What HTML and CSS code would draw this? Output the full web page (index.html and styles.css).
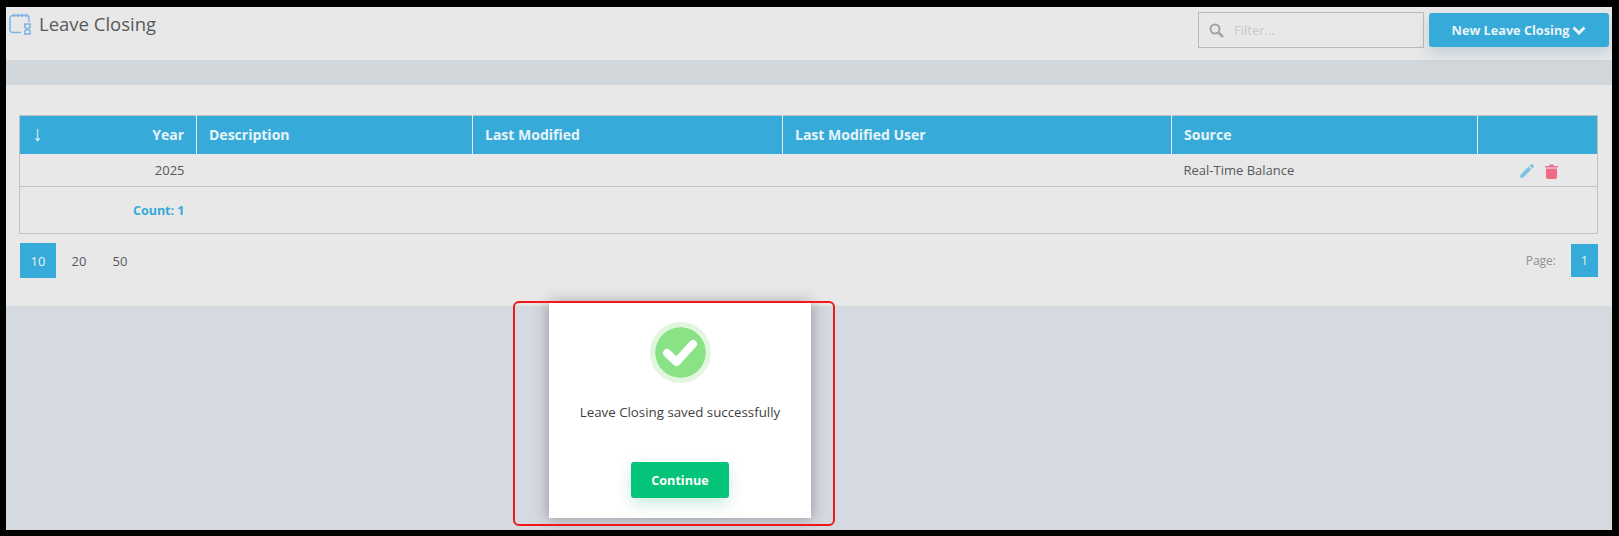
FILE: index.html
```html
<!DOCTYPE html>
<html lang="en">

<head>
    <meta charset="UTF-8">
    <title>Leave Closing</title>
    <link rel="stylesheet" href="styles.css">
</head>

<body>
    <div class="frame">
        <header class="page-header">
            <div class="title">
                <svg class="title-icon" width="23" height="22" viewBox="0 0 23 22" fill="none" stroke="#7fb2e5" stroke-width="1.5">
                    <path d="M12 19.500H3.500A2.500 2.500 0 0 1 1 17V5a2.500 2.500 0 0 1 2.500-2.500h14A2.500 2.500 0 0 1 20 5v4"/>
                    <path d="M5 .500v3.500M9 .500v3.500M13 .500v3.500M17 .500v3.500" stroke-width="1.300"/>
                    <path d="M15 11h7M15 21h7M16 11v3.500l2.500 1.500 2.500-1.500V11M16 21v-3.500l2.500-1.500 2.500 1.500V21"/>
                </svg>
                <h1>Leave Closing</h1>
            </div>
            <div class="search">
                <svg width="15" height="15" viewBox="0 0 15 15" fill="none" stroke="#a3a3a3">
                    <circle cx="6" cy="6" r="4.500" stroke-width="2"/>
                    <path d="M9.500 9.500l4.500 4.500" stroke-width="2.500"/>
                </svg>
                <span>Filter...</span>
            </div>
            <button class="new-btn">New Leave Closing
                <svg width="14" height="9" viewBox="0 0 14 9" fill="none" stroke="#e8f3f8" stroke-width="3">
                    <path d="M1.500 1.500L7 7l5.500-5.500"/>
                </svg>
            </button>
        </header>

        <div class="band"></div>

        <section class="panel">
            <table class="grid">
                <colgroup>
                    <col class="col-year">
                    <col class="col-desc">
                    <col class="col-mod">
                    <col class="col-user">
                    <col class="col-source">
                    <col>
                </colgroup>
                <thead>
                    <tr>
                        <th class="year-head"><span class="sort">↓</span>Year</th>
                        <th>Description</th>
                        <th>Last Modified</th>
                        <th>Last Modified User</th>
                        <th>Source</th>
                        <th></th>
                    </tr>
                </thead>
                <tbody>
                    <tr class="data-row">
                        <td class="num">2025</td>
                        <td></td>
                        <td></td>
                        <td></td>
                        <td>Real-Time Balance</td>
                        <td class="actions">
                            <svg width="14" height="14" viewBox="0 0 14 14" fill="#7cc3e3">
                                <path d="M0 14l.8-3.600L8.600 2.600l2.800 2.800-7.800 7.800z"/>
                                <path d="M9.600 1.600L10.800.4a1.200 1.200 0 0 1 1.700 0l1.100 1.100a1.200 1.200 0 0 1 0 1.700l-1.200 1.200z"/>
                            </svg>
                            <svg width="13" height="15" viewBox="0 0 13 15" fill="#ee6a85">
                                <path d="M0 2h4.500V.500h4V2H13v1.500H0z"/>
                                <path d="M1 4.500h11V13a2 2 0 0 1-2 2H3a2 2 0 0 1-2-2z"/>
                            </svg>
                        </td>
                    </tr>
                    <tr class="count-row">
                        <td class="num count">Count: 1</td>
                        <td colspan="5"></td>
                    </tr>
                </tbody>
            </table>

            <div class="pager">
                <div class="sizes">
                    <a class="page-box">10</a>
                    <a class="page-box plain">20</a>
                    <a class="page-box plain">50</a>
                </div>
                <div class="pages">
                    <span>Page:</span>
                    <a class="page-box one">1</a>
                </div>
            </div>
        </section>

        <div class="dialog">
            <div class="check">
                <svg width="36" height="28" viewBox="0 0 36 28" fill="none" stroke="#fff" stroke-width="8" stroke-linecap="round" stroke-linejoin="round">
                    <path d="M5 14l9.500 9L31 5"/>
                </svg>
            </div>
            <p>Leave Closing saved successfully</p>
            <button class="continue">Continue</button>
        </div>
        <div class="red-box"></div>
    </div>
</body>

</html>
```

FILE: styles.css
```css
* {
    box-sizing: border-box;
}

body {
    margin: 0;
    font-family: "Open Sans", sans-serif;
    background: #000;
}

.frame {
    position: relative;
    height: 536px;
    border-style: solid;
    border-color: #000;
    border-width: 7px 7px 6px 6px;
    background: #d5d9e0;
    overflow: hidden;
}

.page-header {
    display: flex;
    align-items: flex-start;
    height: 53px;
    padding: 5px 3px 0 3px;
    background: #e8e8e8;
}

.title {
    display: flex;
    align-items: flex-start;
    flex: 1;
}

.title-icon {
    margin-top: 1px;
}

h1 {
    margin: -1px 0 0 7px;
    font-size: 18.500px;
    line-height: 26px;
    font-weight: 400;
    color: #58595b;
}

.search {
    display: flex;
    align-items: center;
    gap: 10px;
    width: 226px;
    height: 36px;
    padding-left: 10px;
    border: 1px solid #b9b9b9;
    font-size: 13px;
    color: #c9c9c9;
}

.new-btn {
    display: flex;
    align-items: center;
    justify-content: center;
    gap: 3px;
    width: 180px;
    height: 34px;
    margin: 1px 0 0 5px;
    border: none;
    border-radius: 3px;
    background: #36abd9;
    color: #e8f3f8;
    font-family: inherit;
    font-size: 12.700px;
    font-weight: 700;
    box-shadow: 0 6px 14px rgba(54, 120, 160, 0.22);
}

.band {
    height: 25px;
    background: #d2d7db;
}

.panel {
    height: 221px;
    padding: 30px 14px 0 13px;
    background: #e8e8e8;
}

.grid {
    width: 100%;
    table-layout: fixed;
    border-collapse: collapse;
    border: 1px solid #c2c2c2;
    font-size: 13px;
    color: #58595b;
}

.col-year {
    width: 177px;
}

.col-desc {
    width: 276px;
}

.col-mod {
    width: 310px;
}

.col-user {
    width: 389px;
}

.col-source {
    width: 306px;
}

.grid th {
    height: 38px;
    padding: 0 12px;
    background: #36abd9;
    border-left: 1px solid #e8e8e8;
    color: #e8f3f8;
    font-size: 14px;
    font-weight: 700;
    text-align: left;
}

.grid th:first-child {
    border-left: none;
}

.grid .year-head {
    position: relative;
    text-align: right;
}

.sort {
    position: absolute;
    left: 12px;
    top: 7px;
    font-size: 21px;
    font-weight: 400;
    line-height: 20px;
}

.grid td {
    padding: 0 12px;
}

.data-row td {
    height: 33px;
    border-bottom: 1px solid #c2c2c2;
}

.count-row td {
    height: 47px;
}

.num {
    text-align: right;
}

.grid .count {
    color: #36abd9;
    font-size: 12.500px;
    font-weight: 700;
}

.grid .actions {
    padding: 0 0 0 42px;
}

.actions svg {
    margin-right: 8px;
    vertical-align: middle;
}

.pager {
    display: flex;
    justify-content: space-between;
    align-items: center;
    margin-top: 9px;
    padding: 0 0 0 1px;
    font-size: 13px;
    color: #58595b;
}

.sizes {
    display: flex;
    align-items: center;
    gap: 5px;
}

.page-box {
    display: flex;
    align-items: center;
    justify-content: center;
    width: 36px;
    height: 35px;
    background: #36abd9;
    color: #e8f3f8;
}

.page-box.plain {
    background: none;
    color: #58595b;
}

.pages {
    display: flex;
    align-items: center;
    gap: 15px;
    font-size: 12px;
    color: #909090;
}

.page-box.one {
    width: 27px;
    height: 33px;
    font-size: 12px;
}

.dialog {
    position: absolute;
    left: 543px;
    top: 296px;
    width: 262px;
    height: 215px;
    display: flex;
    flex-direction: column;
    align-items: center;
    background: #fff;
    box-shadow: 0 0 14px rgba(50, 50, 50, 0.45);
}

.check {
    display: flex;
    align-items: center;
    justify-content: center;
    width: 61px;
    height: 61px;
    margin-top: 19px;
    border: 5px solid #e2f6df;
    border-radius: 50%;
    background: #89e285;
    background-clip: padding-box;
}

.dialog p {
    margin: 20px 0 0;
    font-size: 13.300px;
    line-height: 18px;
    color: #3f3f3f;
}

.continue {
    width: 98px;
    height: 36px;
    margin-top: 41px;
    border: none;
    border-radius: 3px;
    background: #03c478;
    color: #fff;
    font-family: inherit;
    font-size: 12.600px;
    font-weight: 700;
    box-shadow: 0 6px 16px rgba(3, 150, 90, 0.2);
}

.red-box {
    position: absolute;
    left: 507px;
    top: 294px;
    width: 322px;
    height: 225px;
    border: 2px solid #f01818;
    border-radius: 6px;
}
```
